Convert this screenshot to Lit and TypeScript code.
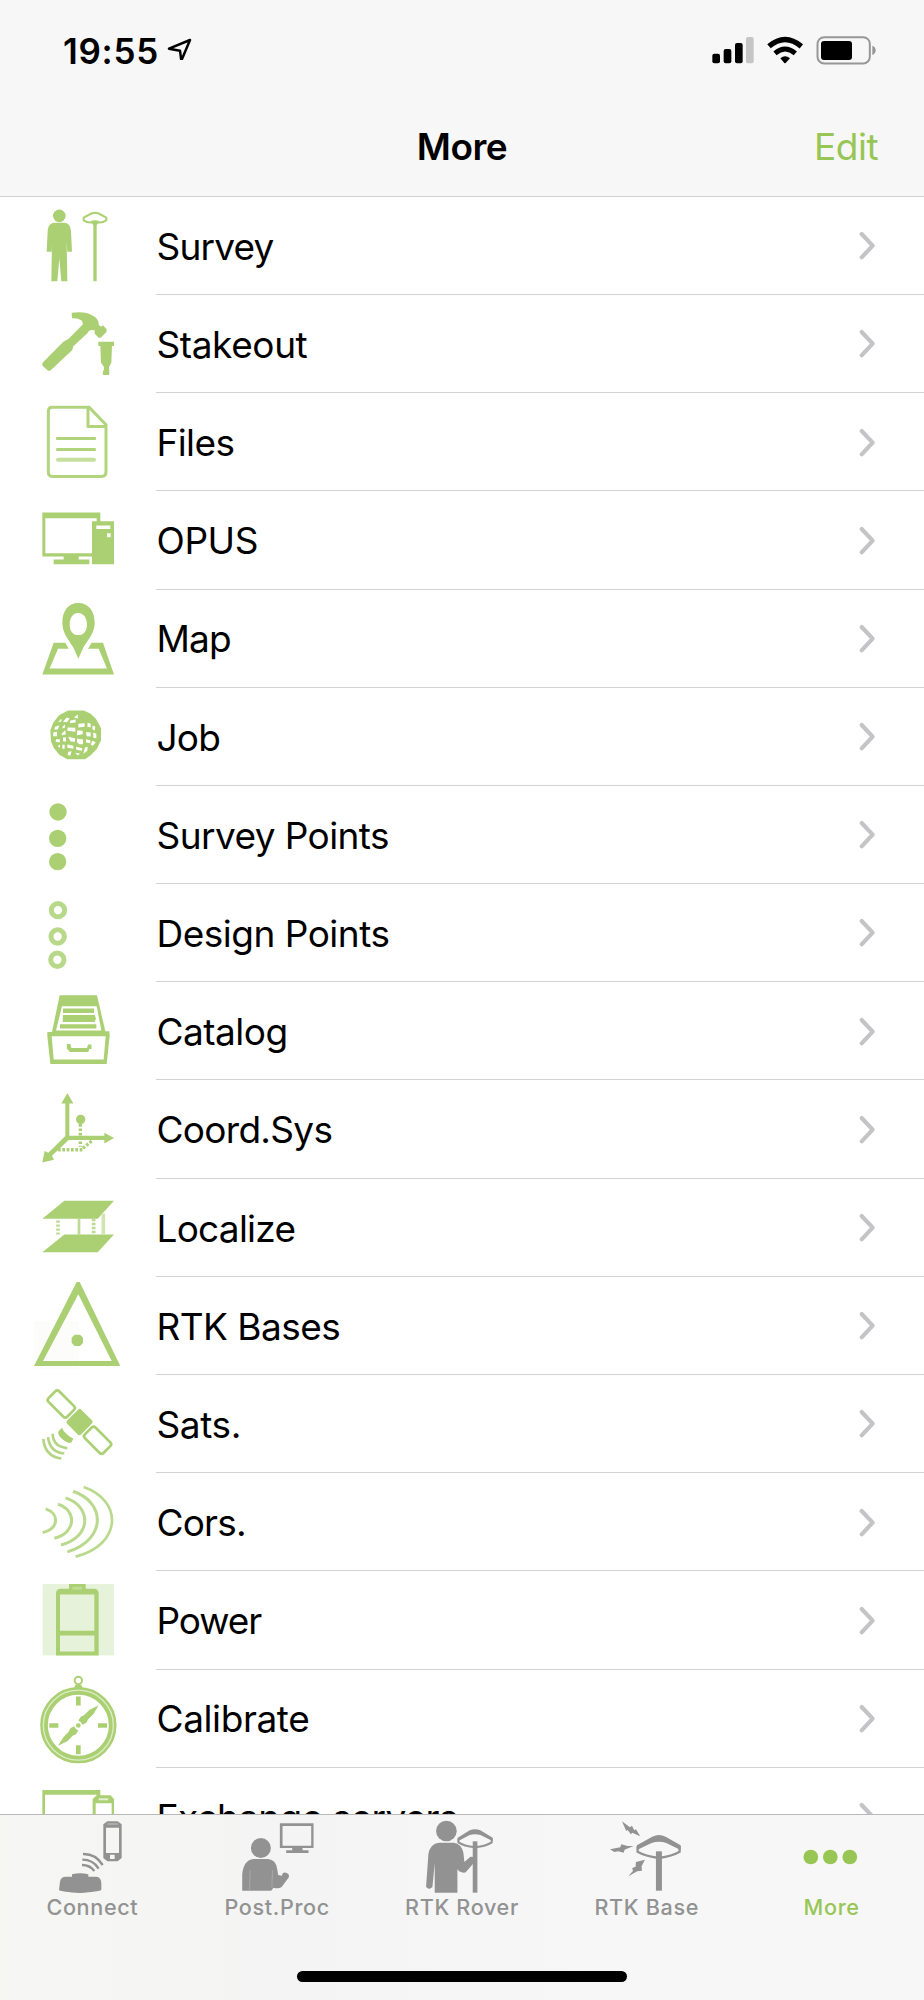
import { LitElement, html, svg, css } from "lit";
import { customElement } from "lit/decorators.js";

const G = "#abd073";
const K = "#929292";

interface Row {
  label: string;
  tracking: number;
  top: number;
  icon: unknown;
}

const ring = (cx: number, cy: number) =>
  svg`<circle cx=${cx} cy=${cy} r="20" fill="none" stroke="#b9d98a" stroke-width="15"/>`;

const rows: Row[] = [
  {
    label: "Survey", tracking: -0.8, top: 5.4,
    icon: svg`
      <circle cx="178" cy="62" r="19"/>
      <path d="M165 83H191C207 83 212 95 213 108L216 170H202L200 140L202 258H184L178 190L172 258H154L156 140L155 170H140L143 108C144 95 149 83 165 83Z"/>
      <path d="M251 75V67L274 55Q285 51 296 55L319 67V75Q311 82 299 82Q285 74 271 82Q259 82 251 75Z" fill="none" stroke=${G} stroke-width="6"/>
      <path d="M285 80V258" stroke=${G} stroke-width="10"/><path d="M271 81L285 93L299 81Z"/>`,
  },
  {
    label: "Stakeout", tracking: -0.4, top: 300,
    icon: svg`
      <path d="M215 353Q258 348 276 361Q297 371 296 389L303 395L309 391L320 403L319 411L304 427L297 429L284 416V406L274 405Q265 406 262 415L220 454L217 465L153 525Q146 531 139 523L128 513Q124 506 132 499L190 440L206 431L249 388L246 377Q232 368 216 370Z"/>
      <path d="M295 440H342V453H336L334 503L327 516V523Q330 531 327 540H309Q307 530 312 523V516L303 503L301 453H295Z"/>`,
  },
  {
    label: "Files", tracking: -0.6, top: 594.6,
    icon: svg`
      <g fill="none" stroke="#b1d47d" stroke-width="9" stroke-linejoin="round">
        <path d="M157 637H267L318 690V832Q318 845 305 845H157Q145 845 145 832V650Q145 637 157 637Z"/>
        <path d="M264 639V695H318"/>
        <path d="M172 731H284M172 764H284" stroke-linecap="round"/>
        <path d="M174 795H282" stroke="#c5df9f" stroke-width="12" stroke-linecap="round"/>
      </g>`,
  },
  {
    label: "OPUS", tracking: -0.4, top: 4.2,
    icon: svg`
      <path fill-rule="evenodd" d="M127 69H301V95H342V224H276V201H236V210H268V224H161V210H191V201H127ZM136 86V191H276V95H290V86ZM289 108V118H331V108ZM321 131V143H332V131Z"/>`,
  },
  {
    label: "Map", tracking: -0.8, top: 298.8,
    icon: svg`
      <path fill-rule="evenodd" d="M235 338C266 338 284 362 284 398C284 426 267 445 250 471L235 505L220 471C203 445 187 426 187 398C187 362 204 338 235 338ZM235 368C219 368 209 382 209 402S219 434 235 434S261 421 261 402S251 368 235 368Z"/>
      <path d="M161 457H196L206 475H174L149 534H321L296 475H264L275 457H309L342 552H127Z"/>`,
  },
  {
    label: "Job", tracking: -0.8, top: 593.4,
    icon: svg`
      <path d="M204 661H251L271 670L287 685L296 701L303 714V750L291 776L272 795L255 807H202L178 794L161 773L153 753L151 721L160 697L177 675Z"/>
      <g fill="#fff">
        <path d="M222 682L233 673L234 685ZM189 695L200 682L209 685L201 696ZM211 691L227 688V697L210 699ZM174 696L184 685V694ZM235 701L254 699V710L235 712ZM263 698L272 701V712L262 710ZM278 706L286 710L284 721L277 717ZM188 709L195 703V712L187 715ZM203 712L226 713L226 725L202 722ZM165 710L178 705L174 717L163 719ZM186 729L196 720L197 733L185 735ZM232 720L248 722V732L231 735ZM258 726L272 727V739L260 738ZM280 727L289 731V744L280 743ZM160 726L171 725V738H159ZM168 747H180L179 757L167 755ZM189 742H198V754H189ZM204 740L225 744V755L212 754ZM231 745L249 748V762H238L231 756ZM258 747L271 750V759L258 757ZM277 752L287 756L279 767L272 764ZM173 768L180 763V773ZM187 764H194V776H187ZM202 763L220 767V776L202 773ZM228 770L247 774L246 782L229 779ZM255 772L263 770L262 782L250 791ZM205 785L215 783L211 797L203 794ZM225 788L240 790L234 796Z"/>
      </g>`,
  },
  {
    label: "Survey Points", tracking: -0.58, top: 3,
    icon: svg`<circle cx="174" cy="81" r="26"/><circle cx="173" cy="160" r="26"/><circle cx="173" cy="230" r="26"/>`,
  },
  {
    label: "Design Points", tracking: -0.5, top: 297.6,
    icon: svg`${ring(174, 376)}${ring(173, 455)}${ring(172, 525)}`,
  },
  {
    label: "Catalog", tracking: -0.5, top: 592.2,
    icon: svg`
      <path fill-rule="evenodd" d="M179 632H291L316 740H328L329 754L320 838H151L142 754V742H156ZM186 665L168 738H304L290 665ZM155 755L161 825H311L317 755Z"/>
      <path d="M189 672H282V685H189ZM189 691H284L288 702L284 712H188ZM180 719H289V732H180Z"/>
      <path d="M203 781H209L212 793H263L266 782H272V791H266L263 800H211L203 791Z" stroke=${G} stroke-width="5"/>`,
  },
  {
    label: "Coord.Sys", tracking: -0.7, top: 1.8,
    icon: svg`
      <path d="M202 41L220 72H208V169H313V160L342 176L313 192V182H206L156 229L162 241L127 249L134 215L145 220L196 170V72H184Z"/>
      <circle cx="242" cy="120" r="14"/>
      <g fill="none" stroke=${G} stroke-width="10" stroke-dasharray="8 5">
        <path d="M241 134V202"/><path d="M174 211H252"/><path d="M275 185L248 207"/>
      </g>`,
  },
  {
    label: "Localize", tracking: -0.75, top: 296.4,
    icon: svg`
      <path d="M193 362H342L293 416H127ZM193 463H342L293 516H127Z"/>
      <g fill="none" stroke="#bddb91" stroke-width="11">
        <path d="M174 421V463" stroke-dasharray="7 5"/><path d="M237 416V463" stroke-width="8"/>
        <path d="M281 416V463" stroke-dasharray="7 5"/><path d="M310 400V463" stroke="#d0e5b1"/>
      </g>`,
  },
  {
    label: "RTK Bases", tracking: -0.55, top: 591,
    icon: svg`
      <rect x="102" y="724" width="135" height="144" fill="#fcfcfa"/>
      <path fill-rule="evenodd" d="M230 606H239L361 858H102ZM235 643L129 843H335Z"/>
      <path d="M224 764H240L249 773V789L240 798H224L215 789V773Z"/>`,
  },
  {
    label: "Sats.", tracking: -0.4, top: 0.6,
    icon: svg`
      <g transform="rotate(45 239 142)">
        <rect x="122" y="120" width="79" height="45" rx="8" fill="none" stroke=${G} stroke-width="8"/>
        <rect x="209" y="112" width="59" height="60" rx="7"/>
        <rect x="276" y="120" width="79" height="45" rx="8" fill="none" stroke=${G} stroke-width="8"/>
      </g>
      <path d="M186 159Q190 171 202 180Q211 188 220 191L214 204Q199 205 184 190T177 168Z"/>
      <g fill="none" stroke="#b4d583" stroke-width="8">
        <path d="M158 177Q159 216 202 220"/><path d="M144 187Q149 232 193 236"/><path d="M130 192Q134 244 184 251"/>
      </g>`,
  },
  {
    label: "Cors.", tracking: -0.8, top: 295.2,
    icon: svg`
      <g fill="none" stroke="#b9d98c" stroke-width="9">
        <path d="M137 403C178 416 178 462 128 474"/>
        <path d="M174 389C230 406 230 475 163 491"/>
        <path d="M197 370C276 396 275 487 183 511"/>
        <path d="M219 350C319 384 319 496 202 532"/>
        <path d="M251 337C370 378 366 511 227 546" stroke-width="8"/>
      </g>`,
  },
  {
    label: "Power", tracking: -1.1, top: 589.8,
    icon: svg`
      <rect x="128" y="629" width="214" height="214" fill="#e7f2da"/>
      <path fill-rule="evenodd" d="M207 629H257V643H284Q296 645 296 658V843H168V658Q168 645 180 643H207ZM180 660V769H283V660ZM180 783V831H283V783Z"/>
      <path d="M217 637H246V646H217Z" fill="#bedb94"/>`,
  },
  {
    label: "Calibrate", tracking: -0.4, top: 14.4,
    icon: svg`
      <circle cx="235" cy="180" r="103" fill="none" stroke=${G} stroke-width="23"/>
      <circle cx="235" cy="180" r="105" fill="none" stroke="#dcecc4" stroke-width="4"/>
      <circle cx="235" cy="46" r="11" fill="none" stroke=${G} stroke-width="6"/>
      <path d="M226 59H244L249 72H221Z"/>
      <path d="M228 94H242V121H228ZM228 240H242V267H228ZM148 174H175V188H148ZM294 174H321V188H294Z"/>
      <path d="M296 120L281 146L264 163L259 173L247 179L243 171L235 166L243 154L251 151L269 134ZM174 242L190 216L206 200L211 189L222 183L227 191L235 196L227 208L219 211L202 228Z"/>
      <circle cx="235" cy="181" r="7"/>`,
  },
  {
    label: "Exchange servers", tracking: -0.72, top: 309,
    icon: svg`
      <path fill-rule="evenodd" d="M127 375H301V391H332L342 402V540H127ZM135 389V525H278V402L290 391V389ZM287 415V530H335V415Z"/>
      <path d="M296 403H325" stroke="#e4f0d4" stroke-width="6"/>`,
  },
];

const mushroom = svg`
  <path d="M774 111L818 86Q838 78 858 86L900 111V125Q878 138 838 144Q796 138 774 125Z" fill="none" stroke=${K} stroke-width="7"/>
  <path d="M772 106L818 80Q838 70 858 80L903 106V120L860 99Q838 92 816 99L772 120Z"/>
  <path d="M829 124H847V242H829Z"/>`;

const tabs = [
  {
    label: "Connect", box: "0 450 554.4 240",
    icon: svg`
      <path fill-rule="evenodd" d="M322 469H353L365 478V579L353 589H322L310 579V478ZM318 488V564H357V488ZM330 569V582H344V569Z"/>
      <path d="M322 477H354" stroke="#c4c4c4" stroke-width="3"/>
      <path d="M216 635V628Q240 621 265 628V635H289Q303 636 304 655V675Q296 680 240 684Q184 681 177 675L180 650Q182 637 195 635Z"/>
      <g fill="none" stroke=${K} stroke-width="7">
        <path d="M249 567C278 566 294 578 308 600"/><path d="M247 584C271 584 285 593 296 611"/><path d="M246 600C264 600 275 607 283 618"/>
      </g>`,
  },
  {
    label: "Post.Proc", box: "554.4 450 554.4 240",
    icon: svg`
      <circle cx="782" cy="549" r="30"/>
      <path d="M760 582H804Q827 584 831 612L834 630L845 632L848 624Q857 619 866 629V637L845 665Q836 673 820 668L813 677H726V628Q730 585 760 582Z"/>
      <path d="M750 616L748 677M817 616L815 668" stroke="#a9a9a9" stroke-width="3"/>
      <path fill-rule="evenodd" d="M839 475H940V549H907V556H925V564H858V556H876V549H839ZM847 483V542H933V483Z"/>`,
  },
  {
    label: "RTK Rover", box: "-31.2 15 554.4 240",
    icon: svg`
      <circle cx="198" cy="63" r="31"/>
      <path d="M176 98H220Q243 101 249 128L252 156L270 140L280 141V159L256 187Q249 191 236 184L231 178V248H163V160L156 232L146 237L137 231L144 132Q149 101 176 98Z"/>
      <path d="M234 88L270 67Q284 60 298 67L334 88V97Q318 108 284 112Q250 108 234 97Z" fill="none" stroke=${K} stroke-width="6"/>
      <path d="M232 83L268 61Q284 54 300 61L337 83V93L300 75Q284 70 268 75L232 94Z"/>
      <path d="M277 94H291V248H277Z"/>`,
  },
  {
    label: "RTK Base", box: "523.2 15 554.4 240",
    icon: svg`${mushroom}
      <path d="M727 34L751 52L757 47L764 61L769 58L782 79L758 68L754 73L744 60L740 63Z"/>
      <path d="M691 118L722 112L725 103L744 108H762L735 119L732 128L716 124L704 126Z"/>
      <path d="M796 149L786 169L787 182L773 184L746 199L760 183L758 174L768 170L769 156Z"/>`,
  },
  {
    label: "More", box: "837.6 450 554.4 240",
    icon: svg`<circle cx="1053" cy="576" r="22"/><circle cx="1111.500" cy="576" r="22"/><circle cx="1170" cy="576" r="22"/>`,
  },
];

@customElement("app-root")
export class AppRoot extends LitElement {
  static styles = css`
    :host {
      display: flex;
      flex-direction: column;
      width: 924px;
      height: 2000px;
      overflow: hidden;
      background: #fff;
      color: #000;
      font-family: Inter, "Liberation Sans", sans-serif;
      white-space: nowrap;
    }
    svg { display: block; flex: none; }
    .top {
      flex: none;
      box-sizing: border-box;
      height: 196.800px;
      background: #f7f7f7;
      border-bottom: 1px solid #d2d2d2;
    }
    .status { display: flex; height: 80px; padding-left: 63px; padding-right: 14px; }
    .time {
      width: 103px;
      padding-top: 30px;
      box-sizing: border-box;
      font-size: 35px;
      line-height: 42px;
      font-weight: 600;
      letter-spacing: 0.700px;
    }
    .gap { flex: 1; }
    .status svg { margin-top: 20px; }
    .nav {
      display: grid;
      grid-template-columns: 1fr auto 1fr;
      align-items: start;
      height: 115px;
      padding: 36px 46px 0;
      box-sizing: border-box;
      font-size: 37px;
      line-height: 62px;
    }
    .title { grid-column: 2; font-weight: 600; letter-spacing: -0.500px; }
    .edit { justify-self: end; color: #97c655; letter-spacing: -0.500px; }
    .list { flex: 1; min-height: 0; overflow: hidden; }
    .row { display: flex; height: 98.200px; }
    .icon { width: 156px; height: 98.200px; fill: #abd073; }
    .cell {
      flex: 1;
      display: flex;
      align-items: center;
      justify-content: space-between;
      box-sizing: border-box;
      border-bottom: 1px solid #d3d3d5;
      padding: 1.500px 48px 0 0;
      font-size: 37px;
    }
    .name { padding-left: 0.500px; }
    .tabbar {
      flex: none;
      height: 186px;
      box-sizing: border-box;
      border-top: 1px solid #b9b9b9;
      background: linear-gradient(90deg, #f6f7f3, #f4f4f4 30%, #f7f7f7 65%);
      display: flex;
      flex-direction: column;
      align-items: center;
    }
    .tabs { display: grid; grid-template-columns: repeat(5, 1fr); width: 100%; height: 156px; }
    .tab {
      display: flex;
      flex-direction: column;
      align-items: center;
      color: #929292;
      fill: #929292;
      font-size: 21.600px;
      line-height: 26px;
      font-weight: 500;
      letter-spacing: 0.650px;
    }
    .tab:last-child { color: #97c655; fill: #97c655; }
    .glyph { width: 184.800px; height: 80px; }
    .label { margin-top: -1px; }
    .home { width: 330px; height: 11px; border-radius: 6px; background: #000; }
  `;

  render() {
    return html`
      <header class="top">
        <div class="status">
          <div class="time">19:55</div>
          <svg width="40" height="40" viewBox="378 0 120 120">
            <path d="M387 86L450 60L424 122L420 92Z" fill="none" stroke="#000" stroke-width="7.500" stroke-linejoin="round"/>
          </svg>
          <div class="gap"></div>
          <svg width="220" height="60" viewBox="0 0 660 180">
            <rect x="67" y="101" width="23" height="29" rx="6"/>
            <rect x="101" y="87" width="23" height="43" rx="6"/>
            <rect x="135" y="69" width="23" height="61" rx="6"/>
            <rect x="168" y="51" width="23" height="79" rx="6" fill="#c5c5c5"/>
            <path d="M237 79Q285 38 334 79" fill="none" stroke="#000" stroke-width="16"/>
            <path d="M255 100Q285 74 316 100" fill="none" stroke="#000" stroke-width="15"/>
            <path d="M271 115Q285 102 300 115L287 129Q285 131 283 129Z"/>
            <rect x="382.500" y="51.500" width="157" height="79" rx="20" fill="none" stroke="#979797" stroke-width="6"/>
            <rect x="393" y="63" width="93" height="57" rx="9"/>
            <path d="M547 77Q557 81 557 91T547 105Z" fill="#979797"/>
          </svg>
        </div>
        <div class="nav">
          <div class="title">More</div>
          <div class="edit">Edit</div>
        </div>
      </header>
      <main class="list">
        ${rows.map(
          (r) => html`<div class="row">
            <svg class="icon" viewBox="0 ${r.top} 468 294.6">${r.icon}</svg>
            <div class="cell">
              <span class="name" style="letter-spacing:${r.tracking}px">${r.label}</span>
              <svg width="20" height="30" viewBox="0 0 60 90">
                <path d="M17 9L50 44L17 79" fill="none" stroke="#c4c4c6" stroke-width="12.500" stroke-linecap="round" stroke-linejoin="round"/>
              </svg>
            </div>
          </div>`
        )}
      </main>
      <footer class="tabbar">
        <nav class="tabs">
          ${tabs.map(
            (t) => html`<div class="tab">
              <svg class="glyph" viewBox=${t.box}>${t.icon}</svg>
              <span class="label">${t.label}</span>
            </div>`
          )}
        </nav>
        <div class="home"></div>
      </footer>
    `;
  }
}
